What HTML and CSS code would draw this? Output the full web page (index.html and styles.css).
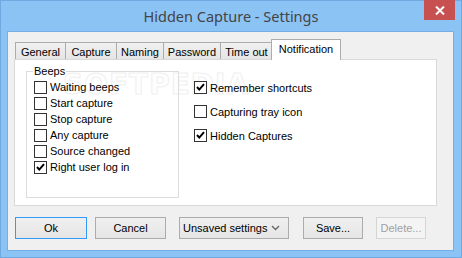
FILE: index.html
```html
<!DOCTYPE html>
<html lang="en">
<head>
    <meta charset="UTF-8">
    <title>Hidden Capture - Settings</title>
    <link rel="stylesheet" href="styles.css">
</head>
<body>
    <div class="window">
        <div class="titlebar">
            <span class="title">Hidden Capture - Settings</span>
            <button class="close-btn">
                <svg width="10" height="9" viewBox="0 0 10 9"><path d="M1 0.5 L9 8.5 M9 0.5 L1 8.5" stroke="#fff" stroke-width="2"/></svg>
            </button>
        </div>

        <div class="client">
            <div class="tabs">
                <div class="tab tab-general">General</div>
                <div class="tab tab-capture">Capture</div>
                <div class="tab tab-naming">Naming</div>
                <div class="tab tab-password">Password</div>
                <div class="tab tab-timeout">Time out</div>
                <div class="tab tab-notify active">Notification</div>
            </div>

            <div class="panel">
                <div class="watermark">SOFTPEDIA</div>

                <fieldset class="group">
                    <legend>Beeps</legend>
                    <div class="check"><span class="box"></span>Waiting beeps</div>
                    <div class="check"><span class="box"></span>Start capture</div>
                    <div class="check"><span class="box"></span>Stop capture</div>
                    <div class="check"><span class="box"></span>Any capture</div>
                    <div class="check"><span class="box"></span>Source changed</div>
                    <div class="check"><span class="box checked"></span>Right user log in</div>
                </fieldset>

                <div class="options">
                    <div class="check"><span class="box checked"></span>Remember shortcuts</div>
                    <div class="check"><span class="box"></span>Capturing tray icon</div>
                    <div class="check"><span class="box checked"></span>Hidden Captures</div>
                </div>
            </div>

            <div class="buttons">
                <button class="btn btn-ok">Ok</button>
                <button class="btn btn-cancel">Cancel</button>
                <div class="combo">
                    <span>Unsaved settings</span>
                    <svg width="9" height="6" viewBox="0 0 9 6"><path d="M1 1 L4.5 4.5 L8 1" stroke="#666" stroke-width="1.4" fill="none"/></svg>
                </div>
                <button class="btn btn-save">Save...</button>
                <button class="btn btn-delete" disabled>Delete...</button>
            </div>
        </div>
    </div>
</body>
</html>
```

FILE: styles.css
```css
body {
    margin: 0;
    background-color: #8cc3f5;
    font-family: Tahoma, "DejaVu Sans", "Liberation Sans", sans-serif;
}
.window {
    width: 462px;
    height: 258px;
    background-color: #8cc3f5;
    box-sizing: border-box;
    border: 1px solid #6fa9e0;
}
.titlebar {
    position: relative;
    height: 30px;
    display: flex;
    align-items: center;
    justify-content: center;
}
.title {
    font-family: "Noto Sans", "Open Sans", sans-serif;
    font-size: 14.5px;
    color: #444;
    margin-top: -1px;
}
.close-btn {
    position: absolute;
    top: -1px;
    right: 6px;
    width: 31px;
    height: 20px;
    border: none;
    padding: 0;
    background-color: #c75050;
    display: flex;
    align-items: center;
    justify-content: center;
}
.client {
    margin: 0 7px 0 6px;
    height: 220px;
    box-sizing: border-box;
    background-color: #f0f0f0;
    border: 1px solid #74aee4;
    padding: 7px 0 0 6px;
    font-family: "Liberation Sans", Arial, sans-serif;
    font-size: 11px;
    color: #000;
}
.tabs {
    display: flex;
    align-items: flex-end;
    height: 20px;
    padding-left: 1px;
    position: relative;
    z-index: 1;
}
.tab {
    height: 17px;
    box-sizing: border-box;
    border: 1px solid #acacac;
    border-bottom: none;
    margin-right: -1px;
    background: linear-gradient(#f0f0f0, #e5e5e5);
    display: flex;
    align-items: center;
    justify-content: center;
    padding-top: 1px;
}
.tab-general { width: 51px; }
.tab-capture { width: 52px; }
.tab-naming { width: 48px; }
.tab-password { width: 58px; }
.tab-timeout { width: 53px; }
.tab-notify { width: 70px; }
.tab.active {
    height: 21px;
    background: #fff;
    margin-bottom: -1px;
    margin-left: -1px;
    padding-top: 0;
    padding-bottom: 2px;
}
.panel {
    position: relative;
    width: 423px;
    height: 147px;
    box-sizing: border-box;
    background-color: #fff;
    border: 1px solid #d9d9d9;
    display: flex;
    align-items: flex-start;
}
.watermark {
    position: absolute;
    left: 48px;
    top: 8px;
    z-index: 0;
    font-family: "DejaVu Sans", sans-serif;
    font-weight: bold;
    font-size: 28px;
    letter-spacing: 1px;
    color: #fefefe;
    -webkit-text-stroke: 1px #f0f0f0;
    pointer-events: none;
}
.group {
    position: relative;
    z-index: 1;
    margin: 5px 0 0 11px;
    width: 153px;
    height: 133px;
    box-sizing: border-box;
    border: 1px solid #dcdcdc;
    padding: 1px 0 0 7px;
}
.group legend {
    padding: 0 1px;
    margin-left: -1px;
    line-height: 13px;
}
.group .check {
    height: 16px;
}
.check {
    display: flex;
    align-items: center;
    white-space: nowrap;
}
.box {
    width: 13px;
    height: 13px;
    box-sizing: border-box;
    border: 1px solid #333;
    background-color: #fff;
    margin-right: 3px;
    flex: none;
}
.box.checked {
    background: #fff url("data:image/svg+xml;utf8,<svg xmlns='http://www.w3.org/2000/svg' width='11' height='11' viewBox='0 0 11 11'><path d='M2 5 L4.3 7.6 L9 2.2' stroke='%23000' stroke-width='2' fill='none'/></svg>") no-repeat center;
}
.options {
    position: relative;
    z-index: 1;
    margin: 21px 0 0 15px;
    display: flex;
    flex-direction: column;
    gap: 11px;
}
.options .check {
    height: 13px;
}
.buttons {
    display: flex;
    align-items: center;
    margin-top: 11px;
    padding-left: 1px;
}
.btn, .combo {
    height: 22px;
    box-sizing: border-box;
    border: 1px solid #acacac;
    background: linear-gradient(#f0f0f0, #e5e5e5);
    font-family: "Liberation Sans", Arial, sans-serif;
    font-size: 11px;
    color: #000;
    padding: 0;
}
.btn-ok {
    width: 72px;
    border-color: #3399ff;
}
.btn-cancel {
    width: 71px;
    margin-left: 8px;
}
.combo {
    width: 110px;
    margin-left: 13px;
    display: flex;
    align-items: center;
    justify-content: space-between;
    padding: 0 8px 0 3px;
}
.btn-save {
    width: 60px;
    margin-left: 14px;
}
.btn-delete {
    width: 50px;
    margin-left: 13px;
    border-color: #d5d5d5;
    background: #f4f4f4;
    color: #a0a0a0;
}
```
